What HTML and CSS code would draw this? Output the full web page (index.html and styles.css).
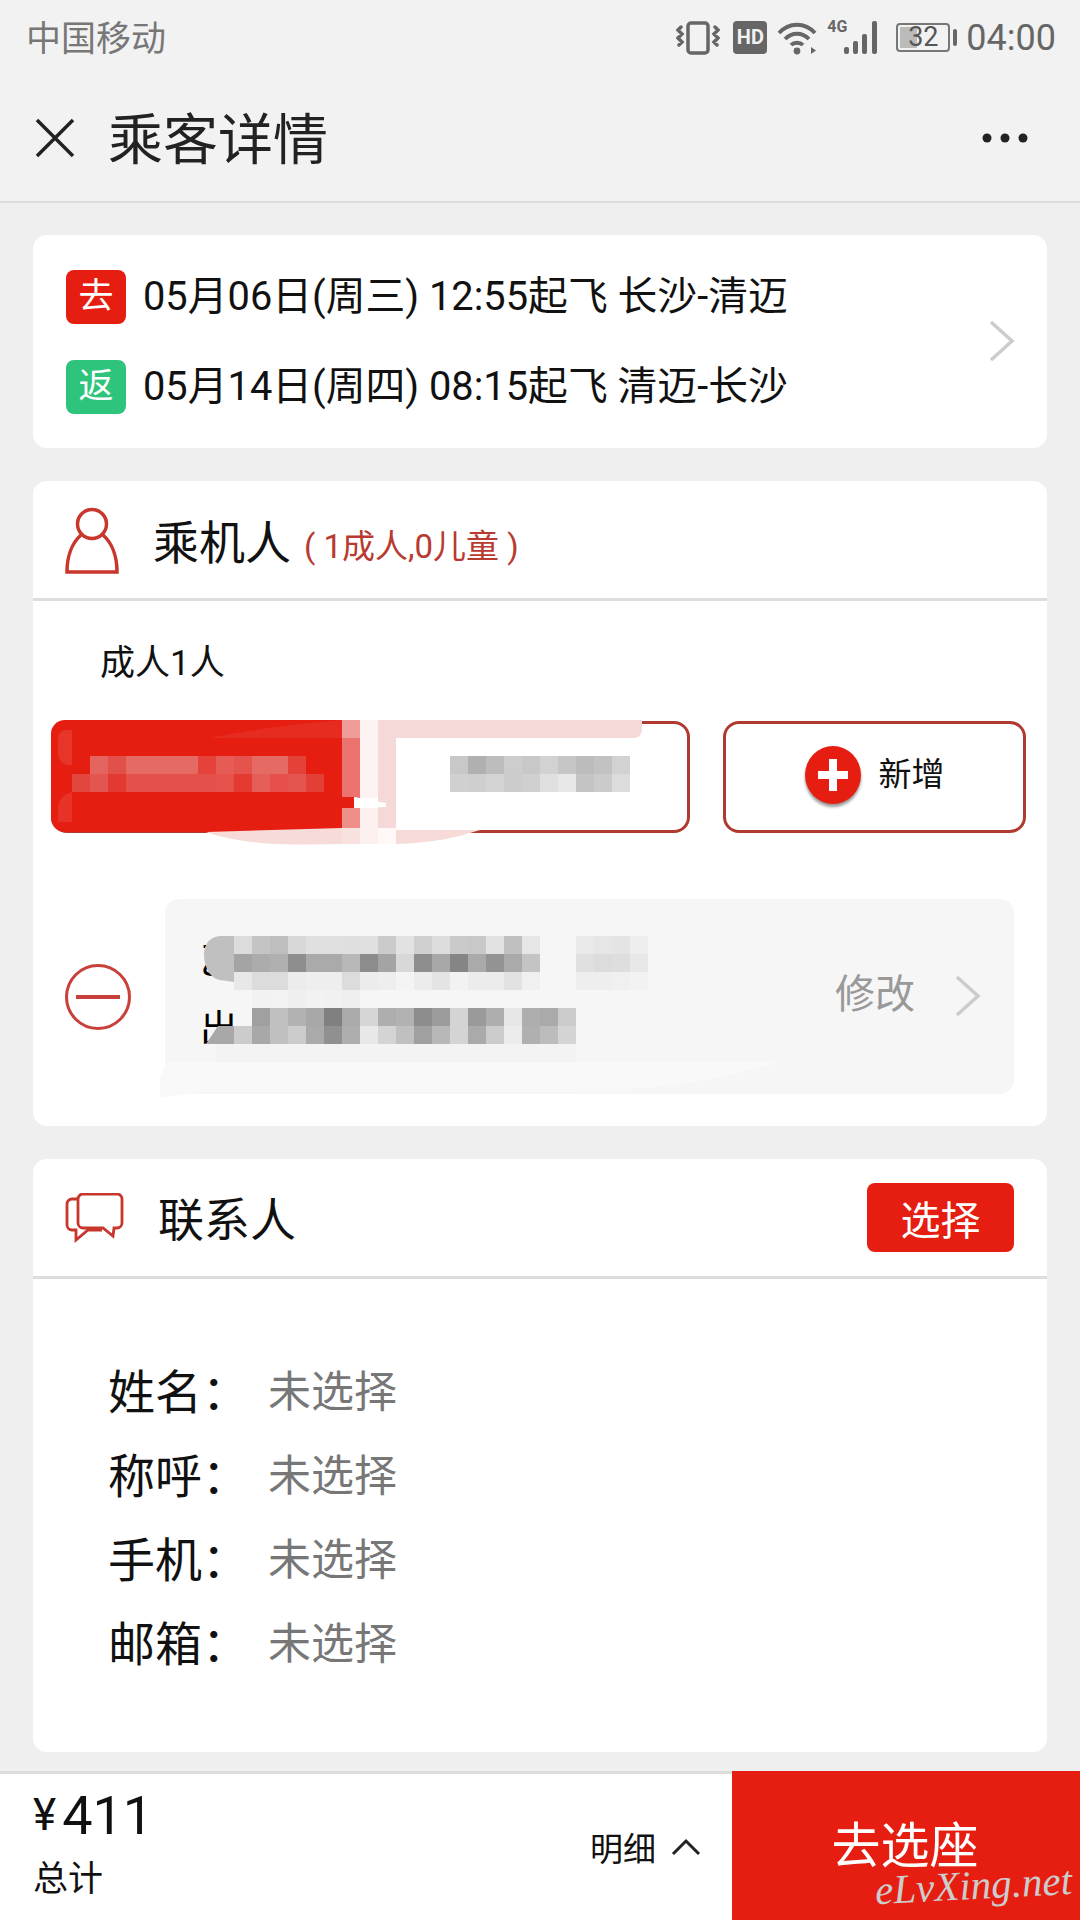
FILE: index.html
```html
<!DOCTYPE html>
<html lang="zh-CN">
<head>
  <meta charset="UTF-8" />
  <meta name="viewport" content="width=device-width, initial-scale=1" />
  <title>乘客详情</title>
  <link rel="stylesheet" href="styles.css">
</head>
<body>

<div class="top">
  <div class="status">
    <span class="carrier">中国移动</span>
    <div class="status-icons">
      <svg class="ic-vibrate" width="44" height="34" viewBox="0 0 44 34" fill="none" stroke="#666">
        <rect x="12" y="2" width="20" height="30" rx="3" stroke-width="3.500"/>
        <path d="M5 6l-3 3 4 4-4 4 4 4-3 3M39 6l3 3-4 4 4 4-4 4 3 3" stroke-width="3.500" stroke-linecap="round"/>
      </svg>
      <span class="hd">HD</span>
      <svg class="ic-wifi" width="40" height="34" viewBox="0 0 40 34" fill="none" stroke="#666" stroke-width="3.800">
        <path d="M2 12C12 1 28 1 38 12M8 18c7-7 17-7 24 0M14 24c3-3 9-3 12 0"/>
        <circle cx="20" cy="30" r="3.400" fill="#666" stroke="none"/>
        <path d="M34 26v7l5-3.500z" fill="#666" stroke="none"/>
      </svg>
      <div class="signal">
        <span class="net">4G</span>
        <svg width="36" height="34" viewBox="0 0 36 34" fill="#666">
          <rect x="0" y="26" width="5" height="7" rx="2"/>
          <rect x="9" y="20" width="5" height="13" rx="2"/>
          <rect x="18" y="13" width="5" height="20" rx="2"/>
          <rect x="28" y="0" width="5" height="33" rx="2"/>
        </svg>
      </div>
      <div class="battery">
        <div class="battery-body"><span class="battery-fill"></span><span class="battery-num">32</span></div>
        <span class="battery-cap"></span>
      </div>
      <span class="clock">04:00</span>
    </div>
  </div>
  <div class="titlebar">
    <div class="titlebar-left">
      <svg width="40" height="40" viewBox="0 0 40 40" stroke="#222" stroke-width="3.500">
        <path d="M2 2l36 36M38 2L2 38"/>
      </svg>
      <h1>乘客详情</h1>
    </div>
    <svg width="46" height="10" viewBox="0 0 46 10" fill="#222">
      <circle cx="5" cy="5" r="4.500"/><circle cx="23" cy="5" r="4.500"/><circle cx="41" cy="5" r="4.500"/>
    </svg>
  </div>
</div>

<main class="content">

  <section class="card trip">
    <div class="trip-rows">
      <div class="trip-row">
        <span class="badge badge-go">去</span>
        <span>05月06日(周三) 12:55起飞 长沙-清迈</span>
      </div>
      <div class="trip-row">
        <span class="badge badge-back">返</span>
        <span>05月14日(周四) 08:15起飞 清迈-长沙</span>
      </div>
    </div>
    <svg class="chevron" width="26" height="42" viewBox="0 0 26 42" fill="none" stroke="#ccc" stroke-width="3.500">
      <path d="M2 2l21 19L2 40"/>
    </svg>
  </section>

  <section class="card passengers">
    <div class="card-head">
      <svg class="ic-person" width="54" height="68" viewBox="0 0 54 68" fill="none" stroke="#c8362c" stroke-width="3.500">
        <circle cx="27" cy="17" r="14.500"/>
        <path d="M16 28C8 35 2 48 2 65h50c0-17-6-30-14-37"/>
      </svg>
      <span class="card-title">乘机人</span>
      <span class="count">( 1成人,0儿童 )</span>
    </div>
    <div class="passengers-body">
      <p class="adult-label">成人1人</p>
      <div class="choice-row">
        <button class="choice choice-wide"></button>
        <button class="choice choice-add">
          <span class="plus"></span>
          <span class="add-label">新增</span>
        </button>
      </div>
      <div class="person-row">
        <svg width="68" height="68" viewBox="0 0 68 68" fill="none" stroke="#c8403a">
          <circle cx="34" cy="34" r="31.500" stroke-width="3"/>
          <path d="M12 34h44" stroke-width="4"/>
        </svg>
        <div class="person-box">
          <div class="person-text"><div>乙</div><div>出</div></div>
          <div class="person-edit">
            <span class="edit-label">修改</span>
            <svg width="26" height="42" viewBox="0 0 26 42" fill="none" stroke="#ccc" stroke-width="3.500">
              <path d="M2 2l21 19L2 40"/>
            </svg>
          </div>
        </div>
      </div>
      <!-- redaction laid over the passenger rows, page coords -0,-481 -->
      <svg class="redact" width="1080" height="645" viewBox="0 481 1080 645">
        <path d="M342 720H65a14 14 0 0 0-14 14v84a14 14 0 0 0 14 14h277z" fill="#e61e12"/>
        <path d="M72 730H66a8 8 0 0 0-8 8v16a12 12 0 0 0 14 11z" fill="#e8352a"/>
        <path d="M72 792c-8 2-14 8-14 16v14h14z" fill="#e83228"/>
        <path d="M342 720v18H210c30-6 80-14 132-18z" fill="#e62c20"/>
        <path d="M206 832c40 14 90 13 136 12h54v-16H342z" fill="#f6dbd9"/>
        <path d="M396 844c34-1 60-6 84-14l-84-2z" fill="#f6dbd9"/>
        <path d="M396 720h246v10a8 8 0 0 1-8 8H396z" fill="#f5d9d8"/>
        <rect x="378" y="720" width="18" height="108" fill="#f5d9d8"/>
        <rect x="396" y="738" width="250" height="92" fill="#fff"/>
        <rect x="342" y="720" width="18" height="18" fill="#f09c98"/>
        <rect x="342" y="738" width="18" height="60" fill="#ec7470"/>
        <rect x="342" y="808" width="18" height="20" fill="#ee8f8a"/>
        <rect x="342" y="828" width="18" height="16" fill="#f8e2e0"/>
        <rect x="360" y="720" width="18" height="78" fill="#fdf3f2"/>
        <rect x="360" y="808" width="18" height="36" fill="#fdf1f0"/>
        <rect x="378" y="828" width="18" height="16" fill="#fff8f7"/>
        <path d="M354 797l32 6v4l-32 1z" fill="#fff"/>
        <rect x="342" y="797" width="12" height="11" fill="#e61e12"/>
        <path d="M166 1062h610c-40 14-120 30-220 30H200l-40 6v-20z" fill="#f9f9f9"/>
        <rect x="216" y="1044" width="360" height="18" fill="#f3f3f3"/>
        <g class="cells">
          <g transform="translate(0 756)">
            <rect x="90" fill="#e4655f"/><rect x="108" fill="#e2504a"/><rect x="126" fill="#e56a64"/><rect x="144" fill="#e56a64"/>
            <rect x="162" fill="#e56a64"/><rect x="180" fill="#e56a64"/><rect x="198" fill="#e4423a"/><rect x="216" fill="#e65c55"/>
            <rect x="234" fill="#e4534c"/><rect x="252" fill="#e56a64"/><rect x="270" fill="#e56a64"/><rect x="288" fill="#e44239"/>
            <rect x="450" fill="#c8c8c8"/><rect x="468" fill="#b0b0b0"/><rect x="486" fill="#bdbdbd"/><rect x="504" fill="#cdcdcd"/><rect x="522" fill="#c8c8c8"/>
            <rect x="540" fill="#d2d2d2"/><rect x="558" fill="#c6c6c6"/><rect x="576" fill="#bcbcbc"/><rect x="594" fill="#c2c2c2"/><rect x="612" fill="#d2d2d2"/>
          </g>
          <g transform="translate(0 774)">
            <rect x="72" fill="#e2453c"/><rect x="90" fill="#e25550"/><rect x="108" fill="#e23a32"/><rect x="126" fill="#e4514b"/><rect x="144" fill="#e4514b"/>
            <rect x="162" fill="#e4514b"/><rect x="180" fill="#e4514b"/><rect x="198" fill="#e4514b"/><rect x="216" fill="#e5524c"/>
            <rect x="234" fill="#e43a32"/><rect x="252" fill="#e65e58"/><rect x="270" fill="#e5504a"/><rect x="288" fill="#e4554f"/><rect x="306" fill="#e23f37"/>
            <rect x="450" fill="#d0d0d0"/><rect x="468" fill="#cfcfcf"/><rect x="486" fill="#d4d4d4"/><rect x="504" fill="#ccc"/><rect x="522" fill="#d0d0d0"/>
            <rect x="540" fill="#e0e0e0"/><rect x="558" fill="#e8e8e8"/><rect x="576" fill="#c4c4c4"/><rect x="594" fill="#cbcbcb"/><rect x="612" fill="#dcdcdc"/>
          </g>
          <g transform="translate(0 936)">
            <rect x="234" fill="#dcdcdc"/><rect x="252" fill="#c4c4c4"/><rect x="270" fill="#bebebe"/><rect x="288" fill="#d8d8d8"/><rect x="306" fill="#e0e0e0"/>
            <rect x="324" fill="#e0e0e0"/><rect x="342" fill="#dfdfdf"/><rect x="360" fill="#e0e0e0"/><rect x="378" fill="#cbcbcb"/><rect x="396" fill="#e2e2e2"/>
            <rect x="414" fill="#d0d0d0"/><rect x="432" fill="#dcdcdc"/><rect x="450" fill="#cacaca"/><rect x="468" fill="#c8c8c8"/><rect x="486" fill="#e2e2e2"/>
            <rect x="504" fill="#c0c0c0"/><rect x="522" fill="#e6e6e6"/><rect x="576" fill="#eaeaea"/><rect x="594" fill="#e6e6e6"/><rect x="612" fill="#e4e4e4"/><rect x="630" fill="#eee"/>
          </g>
          <g transform="translate(0 954)">
            <rect x="234" fill="#a4a4a4"/><rect x="252" fill="#acacac"/><rect x="270" fill="#b0b0b0"/><rect x="288" fill="#8e8e8e"/><rect x="306" fill="#aaa"/>
            <rect x="324" fill="#aaa"/><rect x="342" fill="#b8b8b8"/><rect x="360" fill="#8c8c8c"/><rect x="378" fill="#a4a4a4"/><rect x="396" fill="#d8d8d8"/>
            <rect x="414" fill="#8e8e8e"/><rect x="432" fill="#a8a8a8"/><rect x="450" fill="#858585"/><rect x="468" fill="#aaa"/><rect x="486" fill="#939393"/>
            <rect x="504" fill="#aaa"/><rect x="522" fill="#c4c4c4"/><rect x="576" fill="#e0e0e0"/><rect x="594" fill="#dcdcdc"/><rect x="612" fill="#dedede"/><rect x="630" fill="#e8e8e8"/>
          </g>
          <g transform="translate(0 972)">
            <rect x="234" fill="#e8e8e8"/><rect x="252" fill="#dcdcdc"/><rect x="270" fill="#dcdcdc"/><rect x="288" fill="#ececec"/><rect x="306" fill="#eee"/>
            <rect x="324" fill="#eee"/><rect x="342" fill="#dcdcdc"/><rect x="360" fill="#ececec"/><rect x="378" fill="#eee"/><rect x="396" fill="#f4f4f4"/>
            <rect x="414" fill="#ececec"/><rect x="432" fill="#e4e4e4"/><rect x="450" fill="#f2f2f2"/><rect x="468" fill="#ececec"/><rect x="486" fill="#ececec"/>
            <rect x="504" fill="#e2e2e2"/><rect x="522" fill="#f0f0f0"/><rect x="576" fill="#eee"/><rect x="594" fill="#eee"/><rect x="612" fill="#f0f0f0"/><rect x="630" fill="#f2f2f2"/>
          </g>
          <g transform="translate(0 990)">
            <rect x="252" fill="#f2f2f2"/><rect x="270" fill="#f3f3f3"/><rect x="288" fill="#efefef"/><rect x="306" fill="#f2f2f2"/>
            <rect x="324" fill="#f1f1f1"/><rect x="342" fill="#efefef"/>
          </g>
          <g transform="translate(0 1008)">
            <rect x="252" fill="#a0a0a0"/><rect x="270" fill="#c0c0c0"/><rect x="288" fill="#b2b2b2"/><rect x="306" fill="#a8a8a8"/><rect x="324" fill="#808080"/>
            <rect x="342" fill="#aaa"/><rect x="360" fill="#d6d6d6"/><rect x="378" fill="#aeaeae"/><rect x="396" fill="#b2b2b2"/><rect x="414" fill="#8c8c8c"/>
            <rect x="432" fill="#9c9c9c"/><rect x="450" fill="#d4d4d4"/><rect x="468" fill="#9a9a9a"/><rect x="486" fill="#aeaeae"/><rect x="504" fill="#e6e6e6"/>
            <rect x="522" fill="#aeaeae"/><rect x="540" fill="#aaa"/><rect x="558" fill="#ccc"/>
          </g>
          <g transform="translate(0 1026)">
            <rect x="234" fill="#ccc"/><rect x="252" fill="#a8a8a8"/><rect x="270" fill="#c0c0c0"/><rect x="288" fill="#ccc"/><rect x="306" fill="#aaa"/>
            <rect x="324" fill="#909090"/><rect x="342" fill="#aeaeae"/><rect x="360" fill="#e8e8e8"/><rect x="378" fill="#d4d4d4"/><rect x="396" fill="#c0c0c0"/>
            <rect x="414" fill="#a0a0a0"/><rect x="432" fill="#b8b8b8"/><rect x="450" fill="#d4d4d4"/><rect x="468" fill="#aaa"/><rect x="486" fill="#ccc"/>
            <rect x="504" fill="#ececec"/><rect x="522" fill="#b0b0b0"/><rect x="540" fill="#bcbcbc"/><rect x="558" fill="#d4d4d4"/>
          </g>
        </g>
        <path d="M234 936h-12c-12 0-18 8-18 18s4 24 16 26l14 2z" fill="#c0c0c0"/>
        <path d="M234 1026h-16l-12 18h28z" fill="#a8a8a8"/>
      </svg>
    </div>
  </section>

  <section class="card contact">
    <div class="card-head">
      <svg class="ic-chat" width="60" height="50" viewBox="0 0 60 50" fill="none" stroke="#c8362c" stroke-width="2.800">
        <path d="M14 6H8a5 5 0 0 0-5 5v21a5 5 0 0 0 5 5h4v10l12-10h14"/>
        <path d="M19 1h34a5 5 0 0 1 5 5v24a5 5 0 0 1-5 5h-3l-1 8-10-8H19a5 5 0 0 1-5-5V6a5 5 0 0 1 5-5z" fill="#fff"/>
      </svg>
      <span class="card-title">联系人</span>
      <button class="pick">选择</button>
    </div>
    <div class="contact-list">
      <div class="contact-row"><span class="contact-key">姓名：</span><span class="contact-val">未选择</span></div>
      <div class="contact-row"><span class="contact-key">称呼：</span><span class="contact-val">未选择</span></div>
      <div class="contact-row"><span class="contact-key">手机：</span><span class="contact-val">未选择</span></div>
      <div class="contact-row"><span class="contact-key">邮箱：</span><span class="contact-val">未选择</span></div>
    </div>
  </section>

</main>

<footer class="bottom">
  <div class="total">
    <div class="price"><span class="yen">¥</span>411</div>
    <div class="total-label">总计</div>
  </div>
  <div class="detail">
    <span>明细</span>
    <svg width="30" height="18" viewBox="0 0 30 18" fill="none" stroke="#222" stroke-width="3">
      <path d="M2 16L15 3l13 13"/>
    </svg>
  </div>
  <button class="next">
    <span class="next-label">去选座</span>
    <span class="watermark">eLvXing.net</span>
  </button>
</footer>

</body>
</html>
```

FILE: styles.css
```css
* {
  box-sizing: border-box;
}
html, body {
  margin: 0;
  padding: 0;
}
body {
  width: 1080px;
  height: 1920px;
  overflow: hidden;
  display: flex;
  flex-direction: column;
  background: #efefef;
  color: #111;
  font-family: Roboto, "Noto Sans CJK SC", sans-serif;
}
button {
  font-family: inherit;
  padding: 0;
  border: none;
}

/* status bar and title */
.top {
  background: #f2f2f2;
  border-bottom: 2px solid #dcdcdc;
  height: 203px;
}
.status {
  height: 75px;
  padding: 0 24px 0 26px;
  display: flex;
  align-items: center;
  justify-content: space-between;
}
.carrier {
  margin-bottom: 4px;
  font-size: 35px;
  color: #777;
}
.status-icons {
  display: flex;
  align-items: center;
  color: #666;
}
.hd {
  width: 34px;
  height: 33px;
  margin: 0 10px 0 13px;
  background: #666;
  border-radius: 4px;
  color: #f2f2f2;
  font-size: 20px;
  font-weight: 700;
  line-height: 33px;
  text-align: center;
}
.signal {
  position: relative;
  width: 53px;
  height: 34px;
  margin-left: 10px;
  display: flex;
  justify-content: flex-end;
}
.net {
  position: absolute;
  left: 0;
  top: -4px;
  font-size: 16px;
  font-weight: 700;
}
.battery {
  display: flex;
  align-items: center;
  margin-left: 16px;
  gap: 3px;
}
.battery-body {
  position: relative;
  width: 54px;
  height: 29px;
  border: 2px solid #777;
  border-radius: 4px;
  text-align: center;
  font-size: 27px;
  line-height: 25px;
  color: #555;
}
.battery-fill {
  position: absolute;
  left: 2px;
  top: 2px;
  bottom: 2px;
  width: 17px;
  background: #bbb;
}
.battery-num {
  position: relative;
}
.battery-cap {
  width: 4px;
  height: 17px;
  background: #666;
  border-radius: 2px;
}
.clock {
  margin-left: 9px;
  font-size: 36px;
}
.titlebar {
  height: 126px;
  padding: 0 52px 0 35px;
  display: flex;
  align-items: center;
  justify-content: space-between;
}
.titlebar-left {
  display: flex;
  align-items: center;
  gap: 33px;
}
h1 {
  margin: 4px 0 0;
  font-size: 55px;
  font-weight: 400;
  color: #222;
  line-height: 1;
}

/* cards */
.content {
  flex: 1;
  padding: 32px 33px 0;
  display: flex;
  flex-direction: column;
  gap: 33px;
}
.card {
  background: white;
  border-radius: 14px;
}
.card-head {
  height: 120px;
  padding: 0 33px;
  border-bottom: 3px solid #ddd;
  display: flex;
  align-items: center;
}
.card-title {
  font-size: 46px;
  line-height: 1;
}

.trip {
  height: 213px;
  padding: 0 32px 0 33px;
  display: flex;
  align-items: center;
  justify-content: space-between;
}
.trip-rows {
  display: flex;
  flex-direction: column;
  gap: 36px;
}
.trip-row {
  display: flex;
  align-items: center;
  gap: 17px;
  font-size: 39.800px;
  line-height: 54px;
}
.badge {
  width: 60px;
  height: 54px;
  border-radius: 8px;
  color: #fff;
  font-size: 35px;
  text-align: center;
}
.badge-go {
  background: #e61e12;
}
.badge-back {
  background: #2ec47c;
}
.chevron {
  margin-bottom: 2px;
}

.passengers {
  height: 645px;
}
.ic-person {
  margin: 2px 34px 0 -1px;
}
.passengers .card-title {
  margin-top: 6px;
}
.count {
  margin: 8px 0 0 13px;
  font-size: 33px;
  color: #b83a30;
}
.passengers-body {
  position: relative;
  height: 525px;
  padding: 40px 21px 0 18px;
}
.adult-label {
  margin: 0 0 35px 49px;
  font-size: 35px;
  line-height: 45px;
}
.choice-row {
  display: flex;
  gap: 33px;
}
.choice {
  height: 112px;
  background: #fff;
  border: 3px solid #b03a30;
  border-radius: 16px;
}
.choice-wide {
  width: 639px;
}
.choice-add {
  width: 303px;
  display: flex;
  align-items: center;
  justify-content: center;
  gap: 18px;
  font-size: 33px;
  color: #111;
}
.add-label {
  margin-bottom: 10px;
}
.plus {
  position: relative;
  width: 56px;
  height: 58px;
  margin-bottom: 5px;
  border-radius: 50%;
  background: #e61e12;
  box-shadow: 0 3px 3px #999;
}
.plus::before,
.plus::after {
  content: "";
  position: absolute;
  background: #fff;
}
.plus::before {
  left: 13px;
  right: 13px;
  top: 25px;
  height: 8px;
}
.plus::after {
  top: 13px;
  bottom: 13px;
  left: 24px;
  width: 8px;
}
.person-row {
  margin: 66px 0 0 13px;
  display: flex;
  align-items: center;
  gap: 33px;
}
.person-box {
  width: 849px;
  height: 195px;
  padding: 28px 33px 0 35px;
  background: #f6f6f6;
  border-radius: 14px;
  display: flex;
  justify-content: space-between;
}
.person-text {
  font-size: 38px;
  line-height: 68px;
  color: #000;
}
.person-edit {
  display: flex;
  align-items: center;
  gap: 40px;
  height: 138px;
  font-size: 40px;
  color: #999;
}
.edit-label {
  margin: 0 0 11px 0;
}
.redact {
  position: absolute;
  left: -33px;
  top: -120px;
  pointer-events: none;
}
.cells rect {
  width: 18px;
  height: 18px;
}

.contact {
  height: 593px;
}
.ic-chat {
  margin: 0 35px 0 -2px;
}
.contact .card-title {
  margin: 4px 0 0 -1px;
}
.pick {
  margin-left: auto;
  width: 147px;
  height: 69px;
  background: #e61e12;
  border-radius: 8px;
  color: #fff;
  font-size: 40px;
}
.contact-list {
  padding: 67px 0 0 75px;
}
.contact-row {
  height: 84px;
  display: flex;
  align-items: center;
}
.contact-key {
  width: 160px;
  font-size: 47px;
  color: #111;
}
.contact-val {
  font-size: 43px;
  color: #777;
}

/* bottom bar */
.bottom {
  height: 149px;
  background: white;
  border-top: 3px solid #ddd;
  display: flex;
  align-items: center;
}
.total {
  flex: 1;
  padding-left: 33px;
}
.price {
  margin-top: -9px;
  font-size: 54px;
  line-height: 60px;
}
.yen {
  font-size: 44px;
  margin-right: 6px;
  vertical-align: 4px;
}
.total-label {
  margin-top: 14px;
  font-size: 35px;
  line-height: 40px;
}
.detail {
  display: flex;
  align-items: center;
  gap: 15px;
  margin-right: 31px;
  font-size: 33px;
}
.next {
  position: relative;
  width: 348px;
  height: 149px;
  margin-top: -3px;
  background: #e61e12;
  color: #fff;
  align-self: flex-start;
}
.next-label {
  display: block;
  margin: -8px 0 0 -2px;
  font-size: 49px;
}
.watermark {
  position: absolute;
  left: 143px;
  top: 90px;
  font-family: "Liberation Serif", serif;
  font-style: italic;
  font-size: 41px;
  color: #ccc;
  white-space: nowrap;
  transform: rotate(-3deg);
}
```
